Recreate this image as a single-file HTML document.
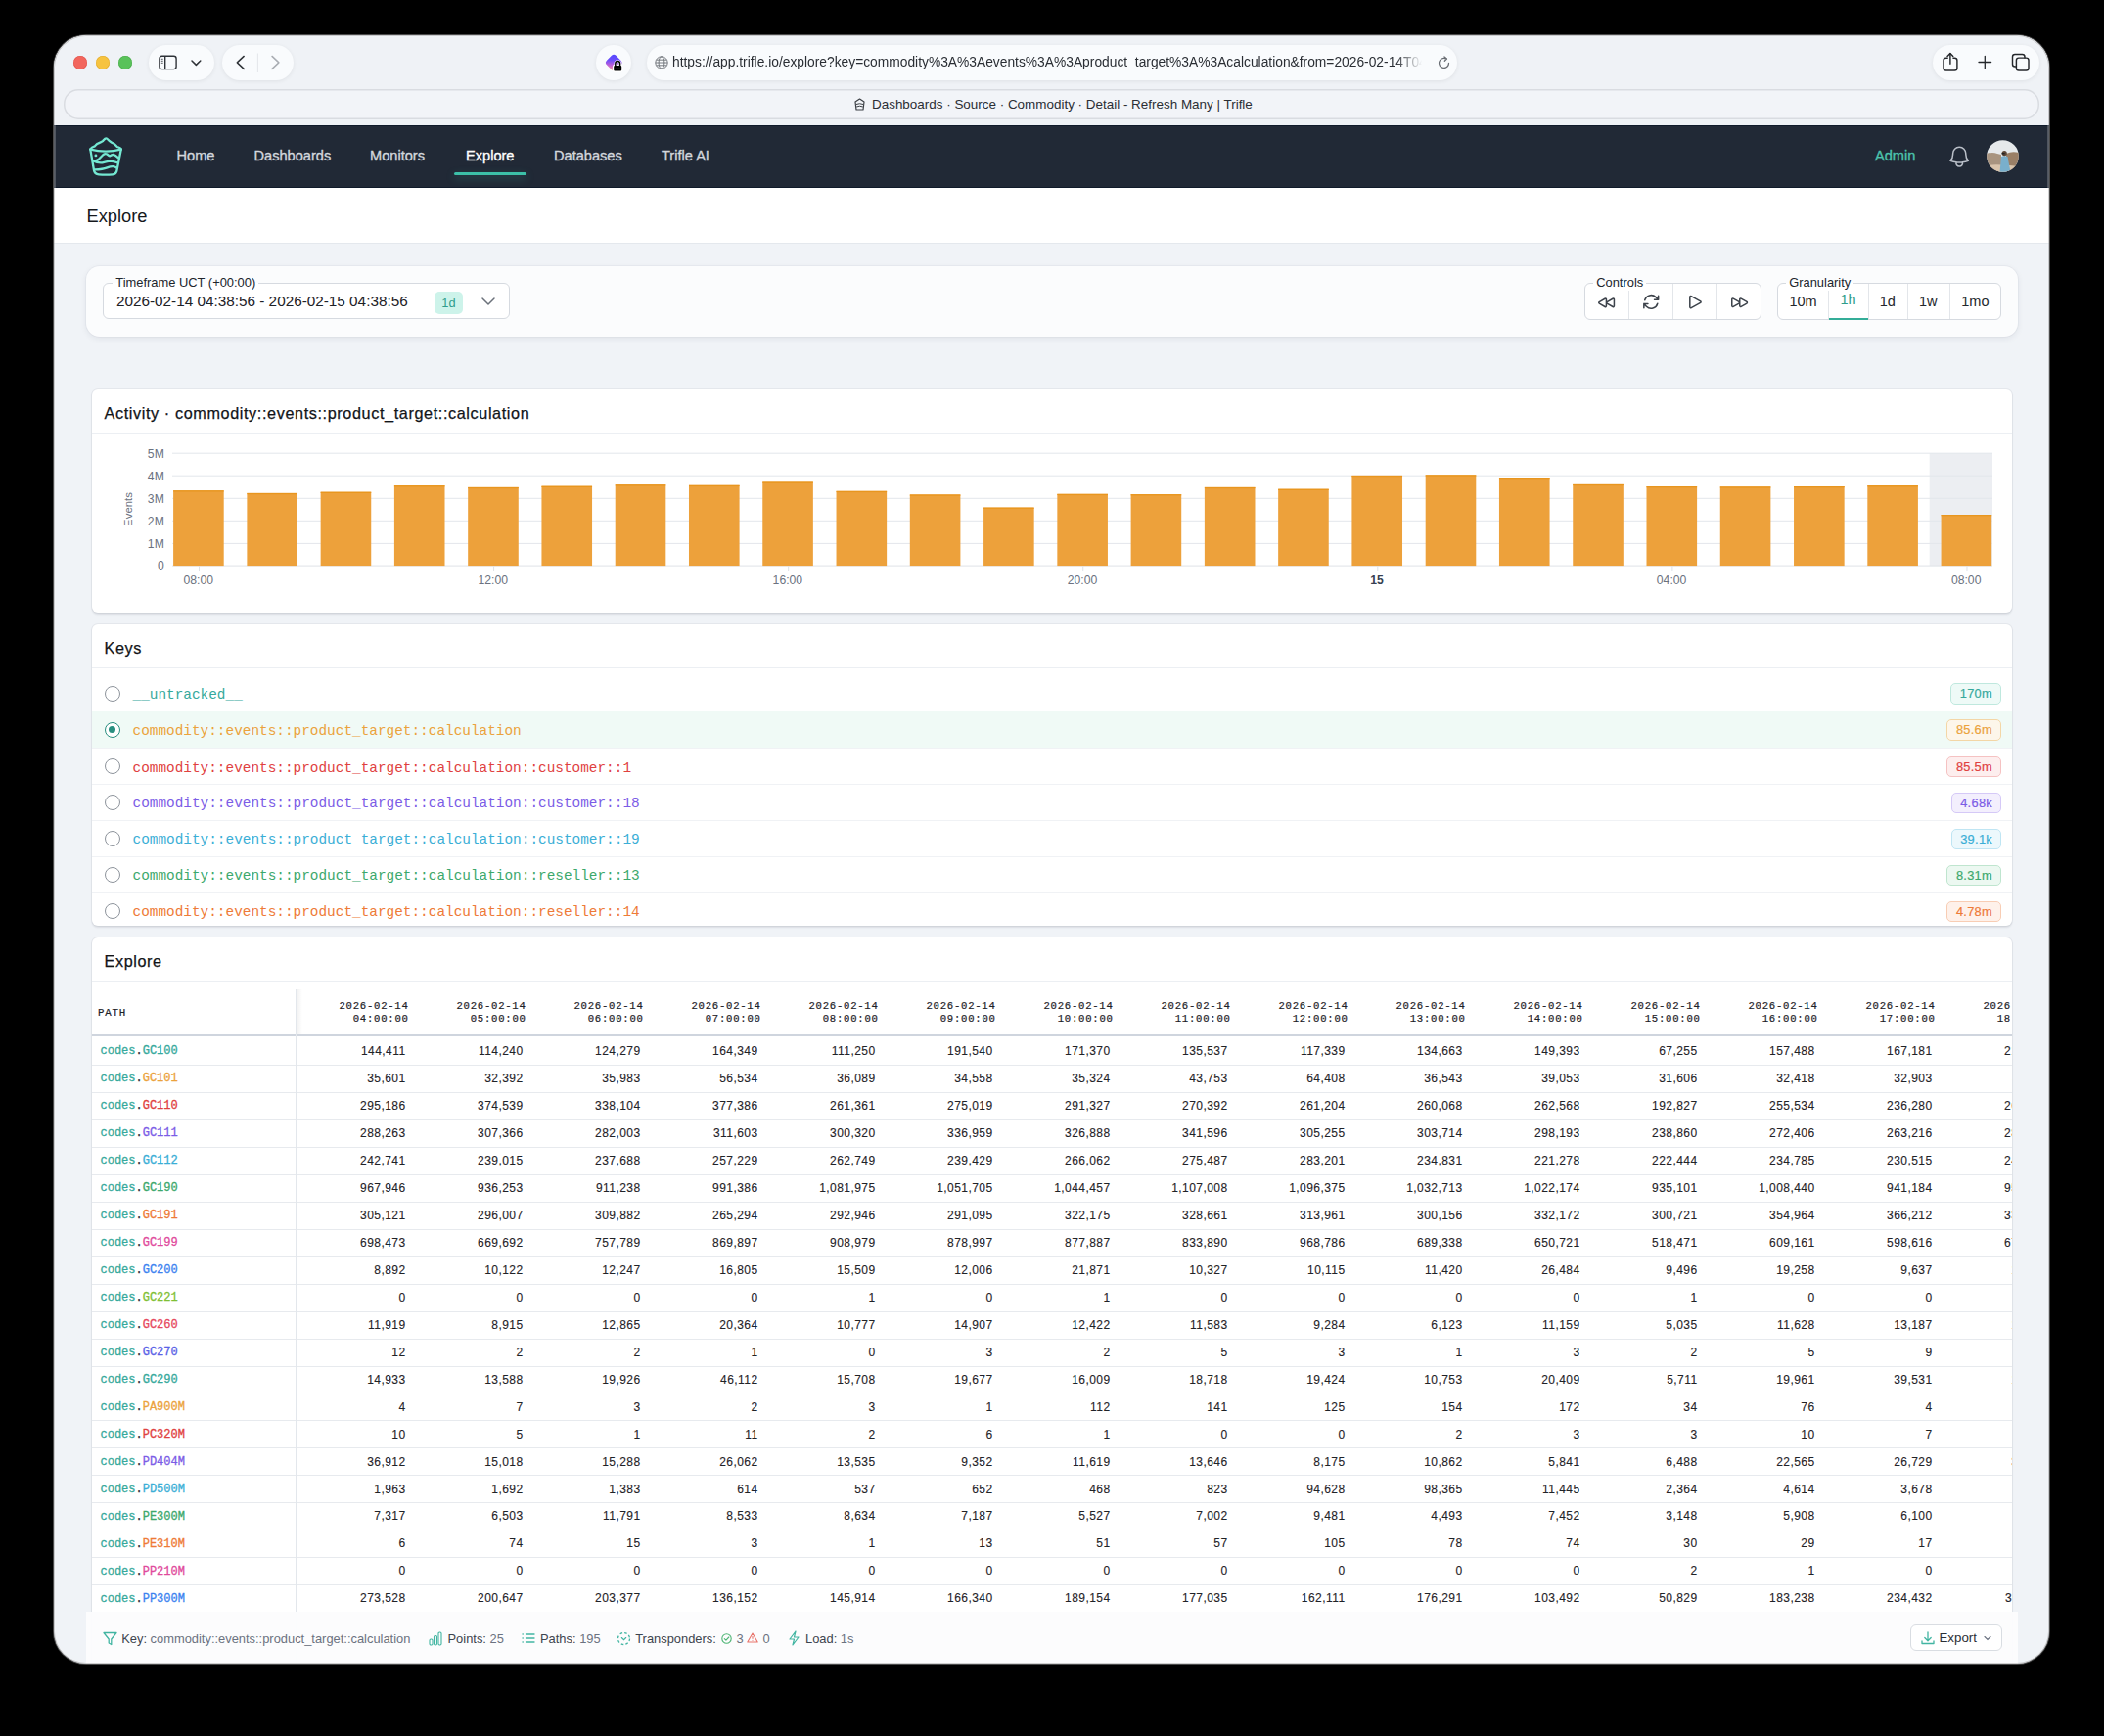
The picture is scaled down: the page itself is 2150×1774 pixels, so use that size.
<!DOCTYPE html><html><head><meta charset="utf-8"><title>Trifle</title><style>
*{box-sizing:border-box;margin:0;padding:0}
html,body{width:2150px;height:1774px;overflow:hidden;background:#000}
body{font-family:"Liberation Sans",sans-serif;color:#1f2329;position:relative}
.mono{font-family:"Liberation Mono",monospace}
.win{position:absolute;left:55px;top:36px;width:2039px;height:1664px;border-radius:33px;overflow:hidden;background:#f0f3f7;box-shadow:0 0 0 1px #4a4a4a}
.abs{position:absolute}
.pill{position:absolute;background:#f9fbfd;border-radius:18px;box-shadow:0 1px 4px rgba(0,0,0,.07)}
.nav{position:absolute;left:0;top:92px;width:2039px;height:63.8px;background:#212936;box-shadow:inset 0 1px 0 #0f1a2a,inset 0 -1px 0 #0f1a2a}
.navi{position:absolute;top:0;height:63px;line-height:63px;font-size:14.6px;color:#d3d7dd;white-space:nowrap;-webkit-text-stroke:.35px currentColor}
.card{position:absolute;background:#fff;border-radius:6px;box-shadow:0 1.5px 2px rgba(30,40,60,.10),0 0 0 1px rgba(30,40,60,.05)}
.chd{position:absolute;left:0;top:0;right:0;height:45px;border-bottom:1px solid #eceff3}
.ctitle{position:absolute;left:12.5px;top:2px;line-height:44px;font-size:16.2px;color:#111418;white-space:nowrap;letter-spacing:.62px;-webkit-text-stroke:.25px currentColor}
.fs{position:absolute;border:1px solid #d6dae0;border-radius:6px;background:#fff}
.lg{position:absolute;z-index:2;top:-9px;font-size:12.9px;line-height:16px;background:linear-gradient(#fbfcfd 50%,#fff 50%);padding:0 3px;color:#20252c;white-space:nowrap}
.seg{position:absolute;top:0;bottom:0;border-left:1px solid #e3e6ea}
.krow{position:absolute;left:0;right:0;height:36.85px;border-top:1px solid #f0f2f5}
.radio{position:absolute;left:13px;width:16px;height:16px;border-radius:50%;border:1.5px solid #8e949c;background:#fff}
.ktxt{position:absolute;left:41.5px;font-size:14.4px;white-space:nowrap}
.badge{position:absolute;right:11px;height:21.3px;line-height:20px;border-radius:5px;font-size:12.8px;letter-spacing:.3px;-webkit-text-stroke:.2px currentColor;padding:0 8px 0 8.5px;border:1px solid}
.th{position:absolute;font-size:10.6px;font-weight:normal;-webkit-text-stroke:.2px #1d2127;letter-spacing:.75px;line-height:13.3px;text-align:right;color:#1d2127;white-space:pre}
.num{position:absolute;font-size:12px;letter-spacing:.45px;text-align:right;color:#1f2328;white-space:nowrap;-webkit-text-stroke:.12px currentColor}
.ptxt{position:absolute;left:8.5px;font-size:12px;white-space:nowrap;-webkit-text-stroke:.3px currentColor}
.sb{position:absolute;font-size:12.9px;color:#3d444e;white-space:nowrap}
.sbv{color:#6b7280}
</style></head><body>
<div class="win">
<div class="abs" style="left:0;top:0;width:2039px;height:92px;background:#eff2f6"></div>
<div class="abs" style="left:20px;top:21px;width:14px;height:14px;border-radius:50%;background:#f2665d;box-shadow:inset 0 0 0 .5px #e0534b"></div>
<div class="abs" style="left:43px;top:21px;width:14px;height:14px;border-radius:50%;background:#f6c33f;box-shadow:inset 0 0 0 .5px #e1aa2a"></div>
<div class="abs" style="left:66px;top:21px;width:14px;height:14px;border-radius:50%;background:#59c25a;box-shadow:inset 0 0 0 .5px #48a949"></div>
<div class="pill" style="left:97px;top:10px;width:67px;height:35.5px"></div>
<svg class="abs" style="left:105px;top:19px" width="50" height="18" viewBox="0 0 50 18"><rect x="2.9" y="2.3" width="17.2" height="13.3" rx="2.6" fill="none" stroke="#2f3338" stroke-width="1.4"/><line x1="8.7" y1="2.3" x2="8.7" y2="15.6" stroke="#2f3338" stroke-width="1.4"/><g stroke="#55595f" stroke-width="1" stroke-linecap="round"><line x1="5.2" y1="5.3" x2="6.3" y2="5.3"/><line x1="5.2" y1="7.3" x2="6.3" y2="7.3"/><line x1="5.2" y1="9.3" x2="6.3" y2="9.3"/></g><path d="M36 7 L40.4 11.4 L44.8 7" fill="none" stroke="#2f3338" stroke-width="1.5" stroke-linecap="round" stroke-linejoin="round"/></svg>
<div class="pill" style="left:172px;top:10px;width:72.5px;height:35.5px"></div>
<svg class="abs" style="left:181px;top:17px" width="56" height="22" viewBox="0 0 56 22"><path d="M13.2 4.4 L6.3 10.9 L13.2 17.4" fill="none" stroke="#2f3338" stroke-width="1.45" stroke-linecap="round" stroke-linejoin="round"/><line x1="27.4" y1="1.5" x2="27.4" y2="21" stroke="#e3e6ea" stroke-width="1"/><path d="M42 4.4 L48.9 10.9 L42 17.4" fill="none" stroke="#a9adb3" stroke-width="1.45" stroke-linecap="round" stroke-linejoin="round"/></svg>
<div class="pill" style="left:554px;top:10px;width:36px;height:36px;border-radius:50%"></div>
<svg class="abs" style="left:560px;top:16px" width="24" height="24" viewBox="0 0 24 24"><defs><linearGradient id="eg" x1="0" y1="0" x2="1" y2="1"><stop offset="0" stop-color="#4f46ff"/><stop offset=".35" stop-color="#6a4dfb"/><stop offset=".65" stop-color="#c463d6"/><stop offset="1" stop-color="#ffb070"/></linearGradient></defs><rect x="5.5" y="5.3" width="13.4" height="13.4" rx="3.2" transform="rotate(45 12.2 12)" fill="url(#eg)"/><g stroke="#fff" stroke-width="2.6"><path d="M13.8 15.5 V13 A2.4 2.4 0 0 1 18.6 13 V15.5" fill="none"/><rect x="12.2" y="15" width="8" height="5.6" rx="1.1" fill="#fff"/></g><path d="M13.8 15.5 V13 A2.4 2.4 0 0 1 18.6 13 V15.5" fill="none" stroke="#000" stroke-width="1.5"/><rect x="12.2" y="15" width="8" height="5.6" rx="1.1" fill="#000"/><line x1="13.6" y1="17.8" x2="18.8" y2="17.8" stroke="#333" stroke-width=".5"/></svg>
<div class="pill" style="left:606px;top:10px;width:828px;height:36px"></div>
<svg class="abs" style="left:613.5px;top:20.8px" width="14" height="14" viewBox="0 0 14 14"><g fill="none" stroke="#6a6e74" stroke-width=".9"><circle cx="7" cy="7" r="6.2"/><ellipse cx="7" cy="7" rx="2.9" ry="6.2"/><line x1="0.8" y1="7" x2="13.2" y2="7"/><line x1="1.6" y1="4.2" x2="12.4" y2="4.2"/><line x1="1.6" y1="9.8" x2="12.4" y2="9.8"/></g></svg>
<div class="abs" style="left:632px;top:18px;width:770px;height:20px;overflow:hidden;white-space:nowrap;font-size:13.8px;line-height:20px;color:#2a2e34;-webkit-mask-image:linear-gradient(90deg,#000 96%,transparent 99.5%)">https://app.trifle.io/explore?key=commodity%3A%3Aevents%3A%3Aproduct_target%3A%3Acalculation&amp;from=2026-02-14T04:38:56</div>
<svg class="abs" style="left:1413px;top:21px" width="15" height="15" viewBox="0 0 15 15"><path d="M12.5 7.5 A5 5 0 1 1 9.5 2.9" fill="none" stroke="#6a6e74" stroke-width="1.3" stroke-linecap="round"/><path d="M8 1 L10.5 3 L8.3 5.2" fill="none" stroke="#6a6e74" stroke-width="1.3" stroke-linecap="round" stroke-linejoin="round"/></svg>
<div class="pill" style="left:1920px;top:10px;width:109px;height:36px"></div>
<svg class="abs" style="left:1927px;top:16px" width="96" height="24" viewBox="0 0 96 24"><g fill="none" stroke="#24272b" stroke-width="1.45" stroke-linecap="round" stroke-linejoin="round"><path d="M8.2 7.3 H6.5 A2.5 2.5 0 0 0 4 9.8 V17.5 A2.5 2.5 0 0 0 6.5 20 H15.4 A2.5 2.5 0 0 0 17.9 17.5 V9.8 A2.5 2.5 0 0 0 15.4 7.3 H14"/><path d="M10.9 2.6 V13.2"/><path d="M8 5.5 L10.9 2.5 L13.8 5.5"/><path d="M46.3 5.3 V17.8 M40 11.5 H52.6" stroke-width="1.3"/><rect x="78.4" y="7.1" width="12.6" height="12.9" rx="2.5"/><path d="M78.4 16 H77 A2.5 2.5 0 0 1 74.5 13.5 V6 A2.5 2.5 0 0 1 77 3.5 H84.5 A2.5 2.5 0 0 1 87 6 V7.1"/></g></svg>
<div class="abs" style="left:10px;top:55.3px;width:2019px;height:30.5px;border-radius:15px;background:#f2f4f8;box-shadow:inset 0 0 0 1.5px #d9dce1"></div>
<svg class="abs" style="left:816px;top:63px" width="15" height="15" viewBox="0 0 15 15"><path d="M3 5 L7.5 2 L12 5 L11 13 H4 Z" fill="none" stroke="#3b3f45" stroke-width="1.2" stroke-linejoin="round"/><path d="M4 7.5 Q7.5 6 11 7.5 M4.2 10 Q7.5 8.5 10.8 10" fill="none" stroke="#3b3f45" stroke-width="1"/></svg>
<div class="abs" style="left:836px;top:61px;height:19px;line-height:19px;font-size:13.45px;color:#2a2e34;white-space:nowrap">Dashboards · Source · Commodity · Detail - Refresh Many | Trifle</div>
<div class="nav">
<svg class="abs" style="left:25px;top:4px" width="55" height="55" viewBox="0 0 55 55"><g fill="none" stroke="#74e8d2" stroke-width="2.3" stroke-linejoin="round" stroke-linecap="round"><path d="M12.3 20.4 C13.5 18.6 15 18 16.8 17.4 C18.2 16.2 18.8 15 20 14.6 C22 13.8 23.5 13.4 25 12.2 C26.2 10.8 27 9.3 28.4 9.3 C29.6 9.3 30.6 11 32 12.2 C33.5 13.6 35 14.2 36.6 14.9 C38 15.7 38.6 17.2 39.8 17.9 C41.5 18.8 43 19 43.8 20.4"/><path d="M12.3 20.6 Q28 24.5 43.8 20.6"/><path d="M12.3 20.6 L16 42 Q16.6 46 21 46.3 Q28 47 35 46.3 Q39 46 39.5 42 L43.8 20.6"/><path d="M15 32.2 Q18.5 32.6 20.6 31 Q23 28.5 25.5 26 Q27.5 24.5 29.5 25.6 Q31 27 32.2 27.4 Q34 26 35.8 25.8 Q38 26.5 40.8 29.2"/><path d="M15.3 32.6 Q19.5 34.8 24.5 34.4 Q28.5 33.2 32 32.6 Q36 32.6 40 34.2"/><path d="M16.8 41.4 Q25 41.2 29.5 39.4 Q33.5 37.8 36 38.2 Q38 38.6 39.2 39.6"/></g><circle cx="17.9" cy="26.9" r="1.45" fill="#74e8d2"/></svg>
<div class="navi" style="left:125.5px;color:#d3d7dd">Home</div>
<div class="navi" style="left:204.5px;color:#d3d7dd">Dashboards</div>
<div class="navi" style="left:323px;color:#d3d7dd">Monitors</div>
<div class="navi" style="left:421px;color:#ffffff">Explore</div>
<div class="navi" style="left:511px;color:#d3d7dd">Databases</div>
<div class="navi" style="left:621px;color:#d3d7dd">Trifle AI</div>
<div class="abs" style="left:409px;top:48.19999999999999px;width:74px;height:3px;background:#3cc0a8;border-radius:2px;box-shadow:0 3px 8px rgba(60,192,168,.35)"></div>
<div class="navi" style="left:1861px;color:#4cc4ad">Admin</div>
<svg class="abs" style="left:1933.8px;top:19.19999999999999px" width="27" height="27" viewBox="0 0 27 27"><g transform="scale(1.1)"><path d="M14.857 17.082a23.848 23.848 0 0 0 5.454-1.31A8.967 8.967 0 0 1 18 9.75V9A6 6 0 0 0 6 9v.75a8.967 8.967 0 0 1-2.312 6.022c1.733.64 3.56 1.085 5.455 1.31m5.714 0a24.255 24.255 0 0 1-5.714 0m5.714 0a3 3 0 1 1-5.714 0" fill="none" stroke="#b9bfc8" stroke-width="1.4" stroke-linecap="round" stroke-linejoin="round"/></g></svg>
<svg class="abs" style="left:1974.6px;top:15.099999999999994px" width="33" height="33" viewBox="0 0 33 33"><defs><clipPath id="av"><circle cx="16.5" cy="16.5" r="16.3"/></clipPath></defs><g clip-path="url(#av)"><rect width="33" height="33" fill="#e6e9eb"/><path d="M0 14 Q6 12 11 14 L15 15 L15 33 L0 33 Z" fill="#a89480"/><path d="M20 14 Q26 11 33 13 L33 33 L20 33 Z" fill="#9a7f66"/><path d="M0 26 Q10 24 33 27 L33 33 L0 33 Z" fill="#d9c4ac"/><path d="M15 17 Q18 15.5 21.5 17 L24.5 33 L13.5 33 Z" fill="#79afcc"/><circle cx="18.2" cy="13.6" r="2.6" fill="#5a4536"/><rect x="15.6" y="13" width="3" height="1.4" fill="#222"/></g></svg>
</div>
<div class="abs" style="left:0;top:155.8px;width:2039px;height:56.8px;background:#fff;border-bottom:1px solid #e4e8ed"></div>
<div class="abs" style="left:33.5px;top:156.8px;line-height:56px;font-size:18.3px;color:#15181c">Explore</div>
<div class="abs" style="left:33px;top:236px;width:1974px;height:72px;background:#fbfcfd;border-radius:14px;box-shadow:0 2px 6px rgba(30,40,60,.08),0 0 0 1px rgba(30,40,60,.03)">
<div class="fs" style="left:16.799999999999997px;top:17px;width:416.5px;height:37.3px">
<div class="lg" style="left:9.5px">Timeframe UCT (+00:00)</div>
<div class="abs" style="left:13.2px;top:8.3px;font-size:15.3px;line-height:20px;color:#1d2126;white-space:nowrap">2026-02-14 04:38:56 - 2026-02-15 04:38:56</div>
<div class="abs" style="left:338.1px;top:7.600000000000023px;width:29px;height:23px;border-radius:5px;background:#cdf3ea;color:#2f9d8c;font-size:12.8px;line-height:23px;text-align:center">1d</div>
<svg class="abs" style="left:385.0px;top:12px" width="16" height="12" viewBox="0 0 16 12"><path d="M2 3 L8 9 L14 3" fill="none" stroke="#6c727b" stroke-width="1.5" stroke-linecap="round" stroke-linejoin="round"/></svg>
</div>
<div class="fs" style="left:1530.7px;top:17.399999999999977px;width:181.5px;height:37.6px">
<div class="lg" style="left:8.5px">Controls</div>
<div class="seg" style="left:44.6px"></div>
<div class="seg" style="left:89.4px"></div>
<div class="seg" style="left:134.4px"></div>
<svg class="abs" style="left:0;top:0" width="180" height="37" viewBox="0 0 180 37"><g fill="none" stroke="#3d434b" stroke-width="1.85" stroke-linejoin="round" stroke-linecap="round"><g transform="translate(12.2,8.9) scale(0.82)"><path d="M21 16.811c0 .864-.933 1.406-1.683.977l-7.108-4.061a1.125 1.125 0 0 1 0-1.954l7.108-4.061A1.125 1.125 0 0 1 21 8.689v8.122ZM11.25 16.811c0 .864-.933 1.406-1.683.977l-7.108-4.061a1.125 1.125 0 0 1 0-1.954L9.567 7.71a1.125 1.125 0 0 1 1.683.977v8.122Z"/></g><g transform="translate(57.4,8.6) scale(0.82)"><path d="M16.023 9.348h4.992v-.001M2.985 19.644v-4.992m0 0h4.992m-4.993 0 3.181 3.183a8.25 8.25 0 0 0 13.803-3.7M4.031 9.865a8.25 8.25 0 0 1 13.803-3.7l3.181 3.182m0-4.991v4.99"/></g><g transform="translate(102.5,8.8) scale(0.82)"><path d="M5.25 5.653c0-.856.917-1.398 1.667-.986l11.54 6.347a1.125 1.125 0 0 1 0 1.972l-11.54 6.347a1.125 1.125 0 0 1-1.667-.986V5.653Z"/></g><g transform="translate(147.3,8.8) scale(0.82)"><path d="M3 8.689c0-.864.933-1.406 1.683-.977l7.108 4.061a1.125 1.125 0 0 1 0 1.954l-7.108 4.061A1.125 1.125 0 0 1 3 16.811V8.69ZM12.75 8.689c0-.864.933-1.406 1.683-.977l7.108 4.061a1.125 1.125 0 0 1 0 1.954l-7.108 4.061a1.125 1.125 0 0 1-1.683-.977V8.69Z"/></g></g></svg>
</div>
<div class="fs" style="left:1727.7px;top:17.399999999999977px;width:229.5px;height:37.6px;overflow:visible">
<div class="lg" style="left:8.5px">Granularity</div>
<div class="abs" style="left:0.0px;width:51.700000000000045px;top:9.5px;text-align:center;font-size:14.5px;line-height:17px;color:#23272d">10m</div>
<div class="seg" style="left:51.700000000000045px"></div>
<div class="abs" style="left:51.700000000000045px;width:40.399999999999864px;top:8px;text-align:center;font-size:14.5px;line-height:17px;color:#2f9d8c">1h</div>
<div class="seg" style="left:92.09999999999991px"></div>
<div class="abs" style="left:92.09999999999991px;width:40.0px;top:9.5px;text-align:center;font-size:14.5px;line-height:17px;color:#23272d">1d</div>
<div class="seg" style="left:132.0999999999999px"></div>
<div class="abs" style="left:132.0999999999999px;width:43.100000000000136px;top:9.5px;text-align:center;font-size:14.5px;line-height:17px;color:#23272d">1w</div>
<div class="seg" style="left:175.20000000000005px"></div>
<div class="abs" style="left:175.20000000000005px;width:53.0px;top:9.5px;text-align:center;font-size:14.5px;line-height:17px;color:#23272d">1mo</div>
<div class="abs" style="left:52.40000000000009px;top:34.400000000000034px;width:40.2px;height:2px;background:#34ad98"></div>
</div>
</div>
<div class="card" style="left:39px;top:362px;width:1962px;height:228px">
<div class="chd"><div class="ctitle">Activity · commodity::events::product_target::calculation</div></div>
<svg class="abs" style="left:0;top:0" width="1962" height="228" viewBox="0 0 1962 228"><rect x="1877.7" y="65.19999999999999" width="64.29999999999995" height="114.90000000000003" fill="#eceef2"/><line x1="82" y1="65.19999999999999" x2="1942" y2="65.19999999999999" stroke="#e3e6eb" stroke-width="1"/><line x1="82" y1="88.19999999999999" x2="1942" y2="88.19999999999999" stroke="#e3e6eb" stroke-width="1"/><line x1="82" y1="111.30000000000001" x2="1942" y2="111.30000000000001" stroke="#e3e6eb" stroke-width="1"/><line x1="82" y1="134.29999999999995" x2="1942" y2="134.29999999999995" stroke="#e3e6eb" stroke-width="1"/><line x1="82" y1="157.39999999999998" x2="1942" y2="157.39999999999998" stroke="#e3e6eb" stroke-width="1"/><line x1="82" y1="180.10000000000002" x2="1942" y2="180.10000000000002" stroke="#dfe2e7" stroke-width="1"/><rect x="83.10" y="103.20" width="51.6" height="76.90" fill="#eda13b"/><rect x="83.10" y="103.20" width="51.6" height="1.3" fill="#e8961f"/><rect x="158.37" y="105.90" width="51.6" height="74.20" fill="#eda13b"/><rect x="158.37" y="105.90" width="51.6" height="1.3" fill="#e8961f"/><rect x="233.64" y="104.70" width="51.6" height="75.40" fill="#eda13b"/><rect x="233.64" y="104.70" width="51.6" height="1.3" fill="#e8961f"/><rect x="308.91" y="98.10" width="51.6" height="82.00" fill="#eda13b"/><rect x="308.91" y="98.10" width="51.6" height="1.3" fill="#e8961f"/><rect x="384.18" y="99.90" width="51.6" height="80.20" fill="#eda13b"/><rect x="384.18" y="99.90" width="51.6" height="1.3" fill="#e8961f"/><rect x="459.45" y="98.70" width="51.6" height="81.40" fill="#eda13b"/><rect x="459.45" y="98.70" width="51.6" height="1.3" fill="#e8961f"/><rect x="534.72" y="97.20" width="51.6" height="82.90" fill="#eda13b"/><rect x="534.72" y="97.20" width="51.6" height="1.3" fill="#e8961f"/><rect x="609.99" y="97.80" width="51.6" height="82.30" fill="#eda13b"/><rect x="609.99" y="97.80" width="51.6" height="1.3" fill="#e8961f"/><rect x="685.26" y="94.50" width="51.6" height="85.60" fill="#eda13b"/><rect x="685.26" y="94.50" width="51.6" height="1.3" fill="#e8961f"/><rect x="760.53" y="103.80" width="51.6" height="76.30" fill="#eda13b"/><rect x="760.53" y="103.80" width="51.6" height="1.3" fill="#e8961f"/><rect x="835.80" y="107.40" width="51.6" height="72.70" fill="#eda13b"/><rect x="835.80" y="107.40" width="51.6" height="1.3" fill="#e8961f"/><rect x="911.07" y="120.60" width="51.6" height="59.50" fill="#eda13b"/><rect x="911.07" y="120.60" width="51.6" height="1.3" fill="#e8961f"/><rect x="986.34" y="106.80" width="51.6" height="73.30" fill="#eda13b"/><rect x="986.34" y="106.80" width="51.6" height="1.3" fill="#e8961f"/><rect x="1061.61" y="107.10" width="51.6" height="73.00" fill="#eda13b"/><rect x="1061.61" y="107.10" width="51.6" height="1.3" fill="#e8961f"/><rect x="1136.88" y="99.90" width="51.6" height="80.20" fill="#eda13b"/><rect x="1136.88" y="99.90" width="51.6" height="1.3" fill="#e8961f"/><rect x="1212.15" y="101.70" width="51.6" height="78.40" fill="#eda13b"/><rect x="1212.15" y="101.70" width="51.6" height="1.3" fill="#e8961f"/><rect x="1287.42" y="87.90" width="51.6" height="92.20" fill="#eda13b"/><rect x="1287.42" y="87.90" width="51.6" height="1.3" fill="#e8961f"/><rect x="1362.69" y="87.30" width="51.6" height="92.80" fill="#eda13b"/><rect x="1362.69" y="87.30" width="51.6" height="1.3" fill="#e8961f"/><rect x="1437.96" y="90.00" width="51.6" height="90.10" fill="#eda13b"/><rect x="1437.96" y="90.00" width="51.6" height="1.3" fill="#e8961f"/><rect x="1513.23" y="96.90" width="51.6" height="83.20" fill="#eda13b"/><rect x="1513.23" y="96.90" width="51.6" height="1.3" fill="#e8961f"/><rect x="1588.50" y="99.00" width="51.6" height="81.10" fill="#eda13b"/><rect x="1588.50" y="99.00" width="51.6" height="1.3" fill="#e8961f"/><rect x="1663.77" y="99.30" width="51.6" height="80.80" fill="#eda13b"/><rect x="1663.77" y="99.30" width="51.6" height="1.3" fill="#e8961f"/><rect x="1739.04" y="99.00" width="51.6" height="81.10" fill="#eda13b"/><rect x="1739.04" y="99.00" width="51.6" height="1.3" fill="#e8961f"/><rect x="1814.31" y="98.10" width="51.6" height="82.00" fill="#eda13b"/><rect x="1814.31" y="98.10" width="51.6" height="1.3" fill="#e8961f"/><rect x="1889.58" y="128.00" width="51.6" height="52.10" fill="#eda13b"/><rect x="1889.58" y="128.00" width="51.6" height="1.3" fill="#e8961f"/><text x="73.80000000000001" y="69.49999999999999" text-anchor="end" font-size="12.2" fill="#6b7280" font-family="Liberation Sans">5M</text><text x="73.80000000000001" y="92.49999999999999" text-anchor="end" font-size="12.2" fill="#6b7280" font-family="Liberation Sans">4M</text><text x="73.80000000000001" y="115.60000000000001" text-anchor="end" font-size="12.2" fill="#6b7280" font-family="Liberation Sans">3M</text><text x="73.80000000000001" y="138.59999999999997" text-anchor="end" font-size="12.2" fill="#6b7280" font-family="Liberation Sans">2M</text><text x="73.80000000000001" y="161.7" text-anchor="end" font-size="12.2" fill="#6b7280" font-family="Liberation Sans">1M</text><text x="73.80000000000001" y="184.40000000000003" text-anchor="end" font-size="12.2" fill="#6b7280" font-family="Liberation Sans">0</text><text x="0" y="0" transform="translate(40.69999999999999,122.5) rotate(-90)" text-anchor="middle" font-size="11.4" fill="#6b7280" font-family="Liberation Sans">Events</text><line x1="109.50" y1="180.10000000000002" x2="109.50" y2="185" stroke="#dfe2e7" stroke-width="1"/><text x="108.70" y="198.79999999999995" text-anchor="middle" font-size="12.2" fill="#6b7280" font-family="Liberation Sans">08:00</text><line x1="410.58" y1="180.10000000000002" x2="410.58" y2="185" stroke="#dfe2e7" stroke-width="1"/><text x="409.78" y="198.79999999999995" text-anchor="middle" font-size="12.2" fill="#6b7280" font-family="Liberation Sans">12:00</text><line x1="711.66" y1="180.10000000000002" x2="711.66" y2="185" stroke="#dfe2e7" stroke-width="1"/><text x="710.86" y="198.79999999999995" text-anchor="middle" font-size="12.2" fill="#6b7280" font-family="Liberation Sans">16:00</text><line x1="1012.74" y1="180.10000000000002" x2="1012.74" y2="185" stroke="#dfe2e7" stroke-width="1"/><text x="1011.94" y="198.79999999999995" text-anchor="middle" font-size="12.2" fill="#6b7280" font-family="Liberation Sans">20:00</text><line x1="1313.82" y1="180.10000000000002" x2="1313.82" y2="185" stroke="#dfe2e7" stroke-width="1"/><text x="1313.02" y="198.79999999999995" text-anchor="middle" font-size="12.2" font-weight="bold" fill="#374151" font-family="Liberation Sans">15</text><line x1="1614.90" y1="180.10000000000002" x2="1614.90" y2="185" stroke="#dfe2e7" stroke-width="1"/><text x="1614.10" y="198.79999999999995" text-anchor="middle" font-size="12.2" fill="#6b7280" font-family="Liberation Sans">04:00</text><line x1="1915.98" y1="180.10000000000002" x2="1915.98" y2="185" stroke="#dfe2e7" stroke-width="1"/><text x="1915.18" y="198.79999999999995" text-anchor="middle" font-size="12.2" fill="#6b7280" font-family="Liberation Sans">08:00</text></svg>
</div>
<div class="card" style="left:39px;top:602px;width:1962px;height:308px;overflow:hidden">
<div class="chd"><div class="ctitle">Keys</div></div>
<div class="krow" style="top:52.40px;border-top:none;">
<div class="radio" style="top:10.4px"></div>
<div class="ktxt mono" style="top:10.5px;line-height:19px;color:#36a99c">__untracked__</div>
<div class="badge" style="top:8px;background:#eefaf7;border-color:#bfe8de;color:#36a99c">170m</div>
</div>
<div class="krow" style="top:89.25px;background:#f0faf6;border-top:none;">
<div class="radio" style="top:10.4px;border-color:#2a8f80;border-width:1.6px"><div class="abs" style="left:2.9px;top:2.9px;width:7px;height:7px;border-radius:50%;background:#2a8f80"></div></div>
<div class="ktxt mono" style="top:10.5px;line-height:19px;color:#eba23c">commodity::events::product_target::calculation</div>
<div class="badge" style="top:8px;background:#fdf6ea;border-color:#f3d6a6;color:#eba23c">85.6m</div>
</div>
<div class="krow" style="top:126.10px;">
<div class="radio" style="top:10.4px"></div>
<div class="ktxt mono" style="top:10.5px;line-height:19px;color:#e0413f">commodity::events::product_target::calculation::customer::1</div>
<div class="badge" style="top:8px;background:#fdeeee;border-color:#f5c2c2;color:#e0413f">85.5m</div>
</div>
<div class="krow" style="top:162.95px;">
<div class="radio" style="top:10.4px"></div>
<div class="ktxt mono" style="top:10.5px;line-height:19px;color:#7b5ce6">commodity::events::product_target::calculation::customer::18</div>
<div class="badge" style="top:8px;background:#f3effd;border-color:#d5c9f7;color:#7b5ce6">4.68k</div>
</div>
<div class="krow" style="top:199.80px;">
<div class="radio" style="top:10.4px"></div>
<div class="ktxt mono" style="top:10.5px;line-height:19px;color:#3aaed6">commodity::events::product_target::calculation::customer::19</div>
<div class="badge" style="top:8px;background:#ecf8fc;border-color:#bfe5f3;color:#3aaed6">39.1k</div>
</div>
<div class="krow" style="top:236.65px;">
<div class="radio" style="top:10.4px"></div>
<div class="ktxt mono" style="top:10.5px;line-height:19px;color:#3ca86c">commodity::events::product_target::calculation::reseller::13</div>
<div class="badge" style="top:8px;background:#ecf8f1;border-color:#bfe5cf;color:#3ca86c">8.31m</div>
</div>
<div class="krow" style="top:273.50px;">
<div class="radio" style="top:10.4px"></div>
<div class="ktxt mono" style="top:10.5px;line-height:19px;color:#ee7a37">commodity::events::product_target::calculation::reseller::14</div>
<div class="badge" style="top:8px;background:#fef1ea;border-color:#f8cdb4;color:#ee7a37">4.78m</div>
</div>
</div>
<div class="card" style="left:39px;top:922px;width:1962px;height:760px;overflow:hidden">
<div class="chd"><div class="ctitle">Explore</div></div>
<div class="abs" style="left:0;top:45.5px;width:1962px;height:54.5px;background:#fff"></div>
<div class="abs" style="left:0;top:99.20000000000005px;width:1962px;height:2px;background:#cfd5de"></div>
<div class="abs mono" style="left:5.900000000000006px;top:70px;font-size:10.8px;font-weight:normal;-webkit-text-stroke:.2px #1d2127;letter-spacing:.8px;color:#1d2127;line-height:14px">PATH</div>
<div class="th mono" style="left:202.80px;width:120.8px;top:64px">2026-02-14
04:00:00</div>
<div class="th mono" style="left:322.80px;width:120.8px;top:64px">2026-02-14
05:00:00</div>
<div class="th mono" style="left:442.80px;width:120.8px;top:64px">2026-02-14
06:00:00</div>
<div class="th mono" style="left:562.80px;width:120.8px;top:64px">2026-02-14
07:00:00</div>
<div class="th mono" style="left:682.80px;width:120.8px;top:64px">2026-02-14
08:00:00</div>
<div class="th mono" style="left:802.80px;width:120.8px;top:64px">2026-02-14
09:00:00</div>
<div class="th mono" style="left:922.80px;width:120.8px;top:64px">2026-02-14
10:00:00</div>
<div class="th mono" style="left:1042.80px;width:120.8px;top:64px">2026-02-14
11:00:00</div>
<div class="th mono" style="left:1162.80px;width:120.8px;top:64px">2026-02-14
12:00:00</div>
<div class="th mono" style="left:1282.80px;width:120.8px;top:64px">2026-02-14
13:00:00</div>
<div class="th mono" style="left:1402.80px;width:120.8px;top:64px">2026-02-14
14:00:00</div>
<div class="th mono" style="left:1522.80px;width:120.8px;top:64px">2026-02-14
15:00:00</div>
<div class="th mono" style="left:1642.80px;width:120.8px;top:64px">2026-02-14
16:00:00</div>
<div class="th mono" style="left:1762.80px;width:120.8px;top:64px">2026-02-14
17:00:00</div>
<div class="th mono" style="left:1882.80px;width:120.8px;top:64px">2026-02-14
18:00:00</div>
<div class="abs" style="left:0;top:129.77px;width:1962px;height:1px;background:#e7eaee"></div>
<div class="ptxt mono" style="top:108.10px;line-height:16px"><span style="color:#36a99c">codes</span><span style="color:#30353b">.</span><span style="color:#36a99c">GC100</span></div>
<div class="num" style="left:210.60px;width:110px;top:107.90px;line-height:16px">144,411</div>
<div class="num" style="left:330.60px;width:110px;top:107.90px;line-height:16px">114,240</div>
<div class="num" style="left:450.60px;width:110px;top:107.90px;line-height:16px">124,279</div>
<div class="num" style="left:570.60px;width:110px;top:107.90px;line-height:16px">164,349</div>
<div class="num" style="left:690.60px;width:110px;top:107.90px;line-height:16px">111,250</div>
<div class="num" style="left:810.60px;width:110px;top:107.90px;line-height:16px">191,540</div>
<div class="num" style="left:930.60px;width:110px;top:107.90px;line-height:16px">171,370</div>
<div class="num" style="left:1050.60px;width:110px;top:107.90px;line-height:16px">135,537</div>
<div class="num" style="left:1170.60px;width:110px;top:107.90px;line-height:16px">117,339</div>
<div class="num" style="left:1290.60px;width:110px;top:107.90px;line-height:16px">134,663</div>
<div class="num" style="left:1410.60px;width:110px;top:107.90px;line-height:16px">149,393</div>
<div class="num" style="left:1530.60px;width:110px;top:107.90px;line-height:16px">67,255</div>
<div class="num" style="left:1650.60px;width:110px;top:107.90px;line-height:16px">157,488</div>
<div class="num" style="left:1770.60px;width:110px;top:107.90px;line-height:16px">167,181</div>
<div class="num" style="left:1890.60px;width:110px;top:107.90px;line-height:16px">213,402</div>
<div class="abs" style="left:0;top:157.75px;width:1962px;height:1px;background:#e7eaee"></div>
<div class="ptxt mono" style="top:136.07px;line-height:16px"><span style="color:#36a99c">codes</span><span style="color:#30353b">.</span><span style="color:#eba23c">GC101</span></div>
<div class="num" style="left:210.60px;width:110px;top:135.87px;line-height:16px">35,601</div>
<div class="num" style="left:330.60px;width:110px;top:135.87px;line-height:16px">32,392</div>
<div class="num" style="left:450.60px;width:110px;top:135.87px;line-height:16px">35,983</div>
<div class="num" style="left:570.60px;width:110px;top:135.87px;line-height:16px">56,534</div>
<div class="num" style="left:690.60px;width:110px;top:135.87px;line-height:16px">36,089</div>
<div class="num" style="left:810.60px;width:110px;top:135.87px;line-height:16px">34,558</div>
<div class="num" style="left:930.60px;width:110px;top:135.87px;line-height:16px">35,324</div>
<div class="num" style="left:1050.60px;width:110px;top:135.87px;line-height:16px">43,753</div>
<div class="num" style="left:1170.60px;width:110px;top:135.87px;line-height:16px">64,408</div>
<div class="num" style="left:1290.60px;width:110px;top:135.87px;line-height:16px">36,543</div>
<div class="num" style="left:1410.60px;width:110px;top:135.87px;line-height:16px">39,053</div>
<div class="num" style="left:1530.60px;width:110px;top:135.87px;line-height:16px">31,606</div>
<div class="num" style="left:1650.60px;width:110px;top:135.87px;line-height:16px">32,418</div>
<div class="num" style="left:1770.60px;width:110px;top:135.87px;line-height:16px">32,903</div>
<div class="num" style="left:1890.60px;width:110px;top:135.87px;line-height:16px">34,118</div>
<div class="abs" style="left:0;top:185.72px;width:1962px;height:1px;background:#e7eaee"></div>
<div class="ptxt mono" style="top:164.05px;line-height:16px"><span style="color:#36a99c">codes</span><span style="color:#30353b">.</span><span style="color:#e0413f">GC110</span></div>
<div class="num" style="left:210.60px;width:110px;top:163.85px;line-height:16px">295,186</div>
<div class="num" style="left:330.60px;width:110px;top:163.85px;line-height:16px">374,539</div>
<div class="num" style="left:450.60px;width:110px;top:163.85px;line-height:16px">338,104</div>
<div class="num" style="left:570.60px;width:110px;top:163.85px;line-height:16px">377,386</div>
<div class="num" style="left:690.60px;width:110px;top:163.85px;line-height:16px">261,361</div>
<div class="num" style="left:810.60px;width:110px;top:163.85px;line-height:16px">275,019</div>
<div class="num" style="left:930.60px;width:110px;top:163.85px;line-height:16px">291,327</div>
<div class="num" style="left:1050.60px;width:110px;top:163.85px;line-height:16px">270,392</div>
<div class="num" style="left:1170.60px;width:110px;top:163.85px;line-height:16px">261,204</div>
<div class="num" style="left:1290.60px;width:110px;top:163.85px;line-height:16px">260,068</div>
<div class="num" style="left:1410.60px;width:110px;top:163.85px;line-height:16px">262,568</div>
<div class="num" style="left:1530.60px;width:110px;top:163.85px;line-height:16px">192,827</div>
<div class="num" style="left:1650.60px;width:110px;top:163.85px;line-height:16px">255,534</div>
<div class="num" style="left:1770.60px;width:110px;top:163.85px;line-height:16px">236,280</div>
<div class="num" style="left:1890.60px;width:110px;top:163.85px;line-height:16px">264,071</div>
<div class="abs" style="left:0;top:213.70px;width:1962px;height:1px;background:#e7eaee"></div>
<div class="ptxt mono" style="top:192.02px;line-height:16px"><span style="color:#36a99c">codes</span><span style="color:#30353b">.</span><span style="color:#7b5ce6">GC111</span></div>
<div class="num" style="left:210.60px;width:110px;top:191.82px;line-height:16px">288,263</div>
<div class="num" style="left:330.60px;width:110px;top:191.82px;line-height:16px">307,366</div>
<div class="num" style="left:450.60px;width:110px;top:191.82px;line-height:16px">282,003</div>
<div class="num" style="left:570.60px;width:110px;top:191.82px;line-height:16px">311,603</div>
<div class="num" style="left:690.60px;width:110px;top:191.82px;line-height:16px">300,320</div>
<div class="num" style="left:810.60px;width:110px;top:191.82px;line-height:16px">336,959</div>
<div class="num" style="left:930.60px;width:110px;top:191.82px;line-height:16px">326,888</div>
<div class="num" style="left:1050.60px;width:110px;top:191.82px;line-height:16px">341,596</div>
<div class="num" style="left:1170.60px;width:110px;top:191.82px;line-height:16px">305,255</div>
<div class="num" style="left:1290.60px;width:110px;top:191.82px;line-height:16px">303,714</div>
<div class="num" style="left:1410.60px;width:110px;top:191.82px;line-height:16px">298,193</div>
<div class="num" style="left:1530.60px;width:110px;top:191.82px;line-height:16px">238,860</div>
<div class="num" style="left:1650.60px;width:110px;top:191.82px;line-height:16px">272,406</div>
<div class="num" style="left:1770.60px;width:110px;top:191.82px;line-height:16px">263,216</div>
<div class="num" style="left:1890.60px;width:110px;top:191.82px;line-height:16px">281,590</div>
<div class="abs" style="left:0;top:241.67px;width:1962px;height:1px;background:#e7eaee"></div>
<div class="ptxt mono" style="top:220.00px;line-height:16px"><span style="color:#36a99c">codes</span><span style="color:#30353b">.</span><span style="color:#3aaed6">GC112</span></div>
<div class="num" style="left:210.60px;width:110px;top:219.80px;line-height:16px">242,741</div>
<div class="num" style="left:330.60px;width:110px;top:219.80px;line-height:16px">239,015</div>
<div class="num" style="left:450.60px;width:110px;top:219.80px;line-height:16px">237,688</div>
<div class="num" style="left:570.60px;width:110px;top:219.80px;line-height:16px">257,229</div>
<div class="num" style="left:690.60px;width:110px;top:219.80px;line-height:16px">262,749</div>
<div class="num" style="left:810.60px;width:110px;top:219.80px;line-height:16px">239,429</div>
<div class="num" style="left:930.60px;width:110px;top:219.80px;line-height:16px">266,062</div>
<div class="num" style="left:1050.60px;width:110px;top:219.80px;line-height:16px">275,487</div>
<div class="num" style="left:1170.60px;width:110px;top:219.80px;line-height:16px">283,201</div>
<div class="num" style="left:1290.60px;width:110px;top:219.80px;line-height:16px">234,831</div>
<div class="num" style="left:1410.60px;width:110px;top:219.80px;line-height:16px">221,278</div>
<div class="num" style="left:1530.60px;width:110px;top:219.80px;line-height:16px">222,444</div>
<div class="num" style="left:1650.60px;width:110px;top:219.80px;line-height:16px">234,785</div>
<div class="num" style="left:1770.60px;width:110px;top:219.80px;line-height:16px">230,515</div>
<div class="num" style="left:1890.60px;width:110px;top:219.80px;line-height:16px">241,662</div>
<div class="abs" style="left:0;top:269.65px;width:1962px;height:1px;background:#e7eaee"></div>
<div class="ptxt mono" style="top:247.97px;line-height:16px"><span style="color:#36a99c">codes</span><span style="color:#30353b">.</span><span style="color:#3ca86c">GC190</span></div>
<div class="num" style="left:210.60px;width:110px;top:247.77px;line-height:16px">967,946</div>
<div class="num" style="left:330.60px;width:110px;top:247.77px;line-height:16px">936,253</div>
<div class="num" style="left:450.60px;width:110px;top:247.77px;line-height:16px">911,238</div>
<div class="num" style="left:570.60px;width:110px;top:247.77px;line-height:16px">991,386</div>
<div class="num" style="left:690.60px;width:110px;top:247.77px;line-height:16px">1,081,975</div>
<div class="num" style="left:810.60px;width:110px;top:247.77px;line-height:16px">1,051,705</div>
<div class="num" style="left:930.60px;width:110px;top:247.77px;line-height:16px">1,044,457</div>
<div class="num" style="left:1050.60px;width:110px;top:247.77px;line-height:16px">1,107,008</div>
<div class="num" style="left:1170.60px;width:110px;top:247.77px;line-height:16px">1,096,375</div>
<div class="num" style="left:1290.60px;width:110px;top:247.77px;line-height:16px">1,032,713</div>
<div class="num" style="left:1410.60px;width:110px;top:247.77px;line-height:16px">1,022,174</div>
<div class="num" style="left:1530.60px;width:110px;top:247.77px;line-height:16px">935,101</div>
<div class="num" style="left:1650.60px;width:110px;top:247.77px;line-height:16px">1,008,440</div>
<div class="num" style="left:1770.60px;width:110px;top:247.77px;line-height:16px">941,184</div>
<div class="num" style="left:1890.60px;width:110px;top:247.77px;line-height:16px">951,277</div>
<div class="abs" style="left:0;top:297.62px;width:1962px;height:1px;background:#e7eaee"></div>
<div class="ptxt mono" style="top:275.95px;line-height:16px"><span style="color:#36a99c">codes</span><span style="color:#30353b">.</span><span style="color:#ee7a37">GC191</span></div>
<div class="num" style="left:210.60px;width:110px;top:275.75px;line-height:16px">305,121</div>
<div class="num" style="left:330.60px;width:110px;top:275.75px;line-height:16px">296,007</div>
<div class="num" style="left:450.60px;width:110px;top:275.75px;line-height:16px">309,882</div>
<div class="num" style="left:570.60px;width:110px;top:275.75px;line-height:16px">265,294</div>
<div class="num" style="left:690.60px;width:110px;top:275.75px;line-height:16px">292,946</div>
<div class="num" style="left:810.60px;width:110px;top:275.75px;line-height:16px">291,095</div>
<div class="num" style="left:930.60px;width:110px;top:275.75px;line-height:16px">322,175</div>
<div class="num" style="left:1050.60px;width:110px;top:275.75px;line-height:16px">328,661</div>
<div class="num" style="left:1170.60px;width:110px;top:275.75px;line-height:16px">313,961</div>
<div class="num" style="left:1290.60px;width:110px;top:275.75px;line-height:16px">300,156</div>
<div class="num" style="left:1410.60px;width:110px;top:275.75px;line-height:16px">332,172</div>
<div class="num" style="left:1530.60px;width:110px;top:275.75px;line-height:16px">300,721</div>
<div class="num" style="left:1650.60px;width:110px;top:275.75px;line-height:16px">354,964</div>
<div class="num" style="left:1770.60px;width:110px;top:275.75px;line-height:16px">366,212</div>
<div class="num" style="left:1890.60px;width:110px;top:275.75px;line-height:16px">331,480</div>
<div class="abs" style="left:0;top:325.60px;width:1962px;height:1px;background:#e7eaee"></div>
<div class="ptxt mono" style="top:303.92px;line-height:16px"><span style="color:#36a99c">codes</span><span style="color:#30353b">.</span><span style="color:#df4a9c">GC199</span></div>
<div class="num" style="left:210.60px;width:110px;top:303.72px;line-height:16px">698,473</div>
<div class="num" style="left:330.60px;width:110px;top:303.72px;line-height:16px">669,692</div>
<div class="num" style="left:450.60px;width:110px;top:303.72px;line-height:16px">757,789</div>
<div class="num" style="left:570.60px;width:110px;top:303.72px;line-height:16px">869,897</div>
<div class="num" style="left:690.60px;width:110px;top:303.72px;line-height:16px">908,979</div>
<div class="num" style="left:810.60px;width:110px;top:303.72px;line-height:16px">878,997</div>
<div class="num" style="left:930.60px;width:110px;top:303.72px;line-height:16px">877,887</div>
<div class="num" style="left:1050.60px;width:110px;top:303.72px;line-height:16px">833,890</div>
<div class="num" style="left:1170.60px;width:110px;top:303.72px;line-height:16px">968,786</div>
<div class="num" style="left:1290.60px;width:110px;top:303.72px;line-height:16px">689,338</div>
<div class="num" style="left:1410.60px;width:110px;top:303.72px;line-height:16px">650,721</div>
<div class="num" style="left:1530.60px;width:110px;top:303.72px;line-height:16px">518,471</div>
<div class="num" style="left:1650.60px;width:110px;top:303.72px;line-height:16px">609,161</div>
<div class="num" style="left:1770.60px;width:110px;top:303.72px;line-height:16px">598,616</div>
<div class="num" style="left:1890.60px;width:110px;top:303.72px;line-height:16px">672,905</div>
<div class="abs" style="left:0;top:353.57px;width:1962px;height:1px;background:#e7eaee"></div>
<div class="ptxt mono" style="top:331.90px;line-height:16px"><span style="color:#36a99c">codes</span><span style="color:#30353b">.</span><span style="color:#3b82f0">GC200</span></div>
<div class="num" style="left:210.60px;width:110px;top:331.70px;line-height:16px">8,892</div>
<div class="num" style="left:330.60px;width:110px;top:331.70px;line-height:16px">10,122</div>
<div class="num" style="left:450.60px;width:110px;top:331.70px;line-height:16px">12,247</div>
<div class="num" style="left:570.60px;width:110px;top:331.70px;line-height:16px">16,805</div>
<div class="num" style="left:690.60px;width:110px;top:331.70px;line-height:16px">15,509</div>
<div class="num" style="left:810.60px;width:110px;top:331.70px;line-height:16px">12,006</div>
<div class="num" style="left:930.60px;width:110px;top:331.70px;line-height:16px">21,871</div>
<div class="num" style="left:1050.60px;width:110px;top:331.70px;line-height:16px">10,327</div>
<div class="num" style="left:1170.60px;width:110px;top:331.70px;line-height:16px">10,115</div>
<div class="num" style="left:1290.60px;width:110px;top:331.70px;line-height:16px">11,420</div>
<div class="num" style="left:1410.60px;width:110px;top:331.70px;line-height:16px">26,484</div>
<div class="num" style="left:1530.60px;width:110px;top:331.70px;line-height:16px">9,496</div>
<div class="num" style="left:1650.60px;width:110px;top:331.70px;line-height:16px">19,258</div>
<div class="num" style="left:1770.60px;width:110px;top:331.70px;line-height:16px">9,637</div>
<div class="num" style="left:1890.60px;width:110px;top:331.70px;line-height:16px">10,418</div>
<div class="abs" style="left:0;top:381.55px;width:1962px;height:1px;background:#e7eaee"></div>
<div class="ptxt mono" style="top:359.88px;line-height:16px"><span style="color:#36a99c">codes</span><span style="color:#30353b">.</span><span style="color:#7fbf35">GC221</span></div>
<div class="num" style="left:210.60px;width:110px;top:359.68px;line-height:16px">0</div>
<div class="num" style="left:330.60px;width:110px;top:359.68px;line-height:16px">0</div>
<div class="num" style="left:450.60px;width:110px;top:359.68px;line-height:16px">0</div>
<div class="num" style="left:570.60px;width:110px;top:359.68px;line-height:16px">0</div>
<div class="num" style="left:690.60px;width:110px;top:359.68px;line-height:16px">1</div>
<div class="num" style="left:810.60px;width:110px;top:359.68px;line-height:16px">0</div>
<div class="num" style="left:930.60px;width:110px;top:359.68px;line-height:16px">1</div>
<div class="num" style="left:1050.60px;width:110px;top:359.68px;line-height:16px">0</div>
<div class="num" style="left:1170.60px;width:110px;top:359.68px;line-height:16px">0</div>
<div class="num" style="left:1290.60px;width:110px;top:359.68px;line-height:16px">0</div>
<div class="num" style="left:1410.60px;width:110px;top:359.68px;line-height:16px">0</div>
<div class="num" style="left:1530.60px;width:110px;top:359.68px;line-height:16px">1</div>
<div class="num" style="left:1650.60px;width:110px;top:359.68px;line-height:16px">0</div>
<div class="num" style="left:1770.60px;width:110px;top:359.68px;line-height:16px">0</div>
<div class="num" style="left:1890.60px;width:110px;top:359.68px;line-height:16px">0</div>
<div class="abs" style="left:0;top:409.52px;width:1962px;height:1px;background:#e7eaee"></div>
<div class="ptxt mono" style="top:387.85px;line-height:16px"><span style="color:#36a99c">codes</span><span style="color:#30353b">.</span><span style="color:#e6485e">GC260</span></div>
<div class="num" style="left:210.60px;width:110px;top:387.65px;line-height:16px">11,919</div>
<div class="num" style="left:330.60px;width:110px;top:387.65px;line-height:16px">8,915</div>
<div class="num" style="left:450.60px;width:110px;top:387.65px;line-height:16px">12,865</div>
<div class="num" style="left:570.60px;width:110px;top:387.65px;line-height:16px">20,364</div>
<div class="num" style="left:690.60px;width:110px;top:387.65px;line-height:16px">10,777</div>
<div class="num" style="left:810.60px;width:110px;top:387.65px;line-height:16px">14,907</div>
<div class="num" style="left:930.60px;width:110px;top:387.65px;line-height:16px">12,422</div>
<div class="num" style="left:1050.60px;width:110px;top:387.65px;line-height:16px">11,583</div>
<div class="num" style="left:1170.60px;width:110px;top:387.65px;line-height:16px">9,284</div>
<div class="num" style="left:1290.60px;width:110px;top:387.65px;line-height:16px">6,123</div>
<div class="num" style="left:1410.60px;width:110px;top:387.65px;line-height:16px">11,159</div>
<div class="num" style="left:1530.60px;width:110px;top:387.65px;line-height:16px">5,035</div>
<div class="num" style="left:1650.60px;width:110px;top:387.65px;line-height:16px">11,628</div>
<div class="num" style="left:1770.60px;width:110px;top:387.65px;line-height:16px">13,187</div>
<div class="num" style="left:1890.60px;width:110px;top:387.65px;line-height:16px">10,955</div>
<div class="abs" style="left:0;top:437.50px;width:1962px;height:1px;background:#e7eaee"></div>
<div class="ptxt mono" style="top:415.82px;line-height:16px"><span style="color:#36a99c">codes</span><span style="color:#30353b">.</span><span style="color:#5a62e6">GC270</span></div>
<div class="num" style="left:210.60px;width:110px;top:415.62px;line-height:16px">12</div>
<div class="num" style="left:330.60px;width:110px;top:415.62px;line-height:16px">2</div>
<div class="num" style="left:450.60px;width:110px;top:415.62px;line-height:16px">2</div>
<div class="num" style="left:570.60px;width:110px;top:415.62px;line-height:16px">1</div>
<div class="num" style="left:690.60px;width:110px;top:415.62px;line-height:16px">0</div>
<div class="num" style="left:810.60px;width:110px;top:415.62px;line-height:16px">3</div>
<div class="num" style="left:930.60px;width:110px;top:415.62px;line-height:16px">2</div>
<div class="num" style="left:1050.60px;width:110px;top:415.62px;line-height:16px">5</div>
<div class="num" style="left:1170.60px;width:110px;top:415.62px;line-height:16px">3</div>
<div class="num" style="left:1290.60px;width:110px;top:415.62px;line-height:16px">1</div>
<div class="num" style="left:1410.60px;width:110px;top:415.62px;line-height:16px">3</div>
<div class="num" style="left:1530.60px;width:110px;top:415.62px;line-height:16px">2</div>
<div class="num" style="left:1650.60px;width:110px;top:415.62px;line-height:16px">5</div>
<div class="num" style="left:1770.60px;width:110px;top:415.62px;line-height:16px">9</div>
<div class="num" style="left:1890.60px;width:110px;top:415.62px;line-height:16px">4</div>
<div class="abs" style="left:0;top:465.47px;width:1962px;height:1px;background:#e7eaee"></div>
<div class="ptxt mono" style="top:443.80px;line-height:16px"><span style="color:#36a99c">codes</span><span style="color:#30353b">.</span><span style="color:#36a99c">GC290</span></div>
<div class="num" style="left:210.60px;width:110px;top:443.60px;line-height:16px">14,933</div>
<div class="num" style="left:330.60px;width:110px;top:443.60px;line-height:16px">13,588</div>
<div class="num" style="left:450.60px;width:110px;top:443.60px;line-height:16px">19,926</div>
<div class="num" style="left:570.60px;width:110px;top:443.60px;line-height:16px">46,112</div>
<div class="num" style="left:690.60px;width:110px;top:443.60px;line-height:16px">15,708</div>
<div class="num" style="left:810.60px;width:110px;top:443.60px;line-height:16px">19,677</div>
<div class="num" style="left:930.60px;width:110px;top:443.60px;line-height:16px">16,009</div>
<div class="num" style="left:1050.60px;width:110px;top:443.60px;line-height:16px">18,718</div>
<div class="num" style="left:1170.60px;width:110px;top:443.60px;line-height:16px">19,424</div>
<div class="num" style="left:1290.60px;width:110px;top:443.60px;line-height:16px">10,753</div>
<div class="num" style="left:1410.60px;width:110px;top:443.60px;line-height:16px">20,409</div>
<div class="num" style="left:1530.60px;width:110px;top:443.60px;line-height:16px">5,711</div>
<div class="num" style="left:1650.60px;width:110px;top:443.60px;line-height:16px">19,961</div>
<div class="num" style="left:1770.60px;width:110px;top:443.60px;line-height:16px">39,531</div>
<div class="num" style="left:1890.60px;width:110px;top:443.60px;line-height:16px">17,342</div>
<div class="abs" style="left:0;top:493.45px;width:1962px;height:1px;background:#e7eaee"></div>
<div class="ptxt mono" style="top:471.77px;line-height:16px"><span style="color:#36a99c">codes</span><span style="color:#30353b">.</span><span style="color:#eba23c">PA900M</span></div>
<div class="num" style="left:210.60px;width:110px;top:471.57px;line-height:16px">4</div>
<div class="num" style="left:330.60px;width:110px;top:471.57px;line-height:16px">7</div>
<div class="num" style="left:450.60px;width:110px;top:471.57px;line-height:16px">3</div>
<div class="num" style="left:570.60px;width:110px;top:471.57px;line-height:16px">2</div>
<div class="num" style="left:690.60px;width:110px;top:471.57px;line-height:16px">3</div>
<div class="num" style="left:810.60px;width:110px;top:471.57px;line-height:16px">1</div>
<div class="num" style="left:930.60px;width:110px;top:471.57px;line-height:16px">112</div>
<div class="num" style="left:1050.60px;width:110px;top:471.57px;line-height:16px">141</div>
<div class="num" style="left:1170.60px;width:110px;top:471.57px;line-height:16px">125</div>
<div class="num" style="left:1290.60px;width:110px;top:471.57px;line-height:16px">154</div>
<div class="num" style="left:1410.60px;width:110px;top:471.57px;line-height:16px">172</div>
<div class="num" style="left:1530.60px;width:110px;top:471.57px;line-height:16px">34</div>
<div class="num" style="left:1650.60px;width:110px;top:471.57px;line-height:16px">76</div>
<div class="num" style="left:1770.60px;width:110px;top:471.57px;line-height:16px">4</div>
<div class="num" style="left:1890.60px;width:110px;top:471.57px;line-height:16px">6</div>
<div class="abs" style="left:0;top:521.43px;width:1962px;height:1px;background:#e7eaee"></div>
<div class="ptxt mono" style="top:499.75px;line-height:16px"><span style="color:#36a99c">codes</span><span style="color:#30353b">.</span><span style="color:#e0413f">PC320M</span></div>
<div class="num" style="left:210.60px;width:110px;top:499.55px;line-height:16px">10</div>
<div class="num" style="left:330.60px;width:110px;top:499.55px;line-height:16px">5</div>
<div class="num" style="left:450.60px;width:110px;top:499.55px;line-height:16px">1</div>
<div class="num" style="left:570.60px;width:110px;top:499.55px;line-height:16px">11</div>
<div class="num" style="left:690.60px;width:110px;top:499.55px;line-height:16px">2</div>
<div class="num" style="left:810.60px;width:110px;top:499.55px;line-height:16px">6</div>
<div class="num" style="left:930.60px;width:110px;top:499.55px;line-height:16px">1</div>
<div class="num" style="left:1050.60px;width:110px;top:499.55px;line-height:16px">0</div>
<div class="num" style="left:1170.60px;width:110px;top:499.55px;line-height:16px">0</div>
<div class="num" style="left:1290.60px;width:110px;top:499.55px;line-height:16px">2</div>
<div class="num" style="left:1410.60px;width:110px;top:499.55px;line-height:16px">3</div>
<div class="num" style="left:1530.60px;width:110px;top:499.55px;line-height:16px">3</div>
<div class="num" style="left:1650.60px;width:110px;top:499.55px;line-height:16px">10</div>
<div class="num" style="left:1770.60px;width:110px;top:499.55px;line-height:16px">7</div>
<div class="num" style="left:1890.60px;width:110px;top:499.55px;line-height:16px">2</div>
<div class="abs" style="left:0;top:549.40px;width:1962px;height:1px;background:#e7eaee"></div>
<div class="ptxt mono" style="top:527.72px;line-height:16px"><span style="color:#36a99c">codes</span><span style="color:#30353b">.</span><span style="color:#7b5ce6">PD404M</span></div>
<div class="num" style="left:210.60px;width:110px;top:527.52px;line-height:16px">36,912</div>
<div class="num" style="left:330.60px;width:110px;top:527.52px;line-height:16px">15,018</div>
<div class="num" style="left:450.60px;width:110px;top:527.52px;line-height:16px">15,288</div>
<div class="num" style="left:570.60px;width:110px;top:527.52px;line-height:16px">26,062</div>
<div class="num" style="left:690.60px;width:110px;top:527.52px;line-height:16px">13,535</div>
<div class="num" style="left:810.60px;width:110px;top:527.52px;line-height:16px">9,352</div>
<div class="num" style="left:930.60px;width:110px;top:527.52px;line-height:16px">11,619</div>
<div class="num" style="left:1050.60px;width:110px;top:527.52px;line-height:16px">13,646</div>
<div class="num" style="left:1170.60px;width:110px;top:527.52px;line-height:16px">8,175</div>
<div class="num" style="left:1290.60px;width:110px;top:527.52px;line-height:16px">10,862</div>
<div class="num" style="left:1410.60px;width:110px;top:527.52px;line-height:16px">5,841</div>
<div class="num" style="left:1530.60px;width:110px;top:527.52px;line-height:16px">6,488</div>
<div class="num" style="left:1650.60px;width:110px;top:527.52px;line-height:16px">22,565</div>
<div class="num" style="left:1770.60px;width:110px;top:527.52px;line-height:16px">26,729</div>
<div class="num" style="left:1890.60px;width:110px;top:527.52px;line-height:16px">31,204</div>
<div class="abs" style="left:0;top:577.37px;width:1962px;height:1px;background:#e7eaee"></div>
<div class="ptxt mono" style="top:555.70px;line-height:16px"><span style="color:#36a99c">codes</span><span style="color:#30353b">.</span><span style="color:#3aaed6">PD500M</span></div>
<div class="num" style="left:210.60px;width:110px;top:555.50px;line-height:16px">1,963</div>
<div class="num" style="left:330.60px;width:110px;top:555.50px;line-height:16px">1,692</div>
<div class="num" style="left:450.60px;width:110px;top:555.50px;line-height:16px">1,383</div>
<div class="num" style="left:570.60px;width:110px;top:555.50px;line-height:16px">614</div>
<div class="num" style="left:690.60px;width:110px;top:555.50px;line-height:16px">537</div>
<div class="num" style="left:810.60px;width:110px;top:555.50px;line-height:16px">652</div>
<div class="num" style="left:930.60px;width:110px;top:555.50px;line-height:16px">468</div>
<div class="num" style="left:1050.60px;width:110px;top:555.50px;line-height:16px">823</div>
<div class="num" style="left:1170.60px;width:110px;top:555.50px;line-height:16px">94,628</div>
<div class="num" style="left:1290.60px;width:110px;top:555.50px;line-height:16px">98,365</div>
<div class="num" style="left:1410.60px;width:110px;top:555.50px;line-height:16px">11,445</div>
<div class="num" style="left:1530.60px;width:110px;top:555.50px;line-height:16px">2,364</div>
<div class="num" style="left:1650.60px;width:110px;top:555.50px;line-height:16px">4,614</div>
<div class="num" style="left:1770.60px;width:110px;top:555.50px;line-height:16px">3,678</div>
<div class="num" style="left:1890.60px;width:110px;top:555.50px;line-height:16px">2,105</div>
<div class="abs" style="left:0;top:605.35px;width:1962px;height:1px;background:#e7eaee"></div>
<div class="ptxt mono" style="top:583.67px;line-height:16px"><span style="color:#36a99c">codes</span><span style="color:#30353b">.</span><span style="color:#3ca86c">PE300M</span></div>
<div class="num" style="left:210.60px;width:110px;top:583.47px;line-height:16px">7,317</div>
<div class="num" style="left:330.60px;width:110px;top:583.47px;line-height:16px">6,503</div>
<div class="num" style="left:450.60px;width:110px;top:583.47px;line-height:16px">11,791</div>
<div class="num" style="left:570.60px;width:110px;top:583.47px;line-height:16px">8,533</div>
<div class="num" style="left:690.60px;width:110px;top:583.47px;line-height:16px">8,634</div>
<div class="num" style="left:810.60px;width:110px;top:583.47px;line-height:16px">7,187</div>
<div class="num" style="left:930.60px;width:110px;top:583.47px;line-height:16px">5,527</div>
<div class="num" style="left:1050.60px;width:110px;top:583.47px;line-height:16px">7,002</div>
<div class="num" style="left:1170.60px;width:110px;top:583.47px;line-height:16px">9,481</div>
<div class="num" style="left:1290.60px;width:110px;top:583.47px;line-height:16px">4,493</div>
<div class="num" style="left:1410.60px;width:110px;top:583.47px;line-height:16px">7,452</div>
<div class="num" style="left:1530.60px;width:110px;top:583.47px;line-height:16px">3,148</div>
<div class="num" style="left:1650.60px;width:110px;top:583.47px;line-height:16px">5,908</div>
<div class="num" style="left:1770.60px;width:110px;top:583.47px;line-height:16px">6,100</div>
<div class="num" style="left:1890.60px;width:110px;top:583.47px;line-height:16px">7,213</div>
<div class="abs" style="left:0;top:633.32px;width:1962px;height:1px;background:#e7eaee"></div>
<div class="ptxt mono" style="top:611.65px;line-height:16px"><span style="color:#36a99c">codes</span><span style="color:#30353b">.</span><span style="color:#ee7a37">PE310M</span></div>
<div class="num" style="left:210.60px;width:110px;top:611.45px;line-height:16px">6</div>
<div class="num" style="left:330.60px;width:110px;top:611.45px;line-height:16px">74</div>
<div class="num" style="left:450.60px;width:110px;top:611.45px;line-height:16px">15</div>
<div class="num" style="left:570.60px;width:110px;top:611.45px;line-height:16px">3</div>
<div class="num" style="left:690.60px;width:110px;top:611.45px;line-height:16px">1</div>
<div class="num" style="left:810.60px;width:110px;top:611.45px;line-height:16px">13</div>
<div class="num" style="left:930.60px;width:110px;top:611.45px;line-height:16px">51</div>
<div class="num" style="left:1050.60px;width:110px;top:611.45px;line-height:16px">57</div>
<div class="num" style="left:1170.60px;width:110px;top:611.45px;line-height:16px">105</div>
<div class="num" style="left:1290.60px;width:110px;top:611.45px;line-height:16px">78</div>
<div class="num" style="left:1410.60px;width:110px;top:611.45px;line-height:16px">74</div>
<div class="num" style="left:1530.60px;width:110px;top:611.45px;line-height:16px">30</div>
<div class="num" style="left:1650.60px;width:110px;top:611.45px;line-height:16px">29</div>
<div class="num" style="left:1770.60px;width:110px;top:611.45px;line-height:16px">17</div>
<div class="num" style="left:1890.60px;width:110px;top:611.45px;line-height:16px">12</div>
<div class="abs" style="left:0;top:661.30px;width:1962px;height:1px;background:#e7eaee"></div>
<div class="ptxt mono" style="top:639.62px;line-height:16px"><span style="color:#36a99c">codes</span><span style="color:#30353b">.</span><span style="color:#df4a9c">PP210M</span></div>
<div class="num" style="left:210.60px;width:110px;top:639.42px;line-height:16px">0</div>
<div class="num" style="left:330.60px;width:110px;top:639.42px;line-height:16px">0</div>
<div class="num" style="left:450.60px;width:110px;top:639.42px;line-height:16px">0</div>
<div class="num" style="left:570.60px;width:110px;top:639.42px;line-height:16px">0</div>
<div class="num" style="left:690.60px;width:110px;top:639.42px;line-height:16px">0</div>
<div class="num" style="left:810.60px;width:110px;top:639.42px;line-height:16px">0</div>
<div class="num" style="left:930.60px;width:110px;top:639.42px;line-height:16px">0</div>
<div class="num" style="left:1050.60px;width:110px;top:639.42px;line-height:16px">0</div>
<div class="num" style="left:1170.60px;width:110px;top:639.42px;line-height:16px">0</div>
<div class="num" style="left:1290.60px;width:110px;top:639.42px;line-height:16px">0</div>
<div class="num" style="left:1410.60px;width:110px;top:639.42px;line-height:16px">0</div>
<div class="num" style="left:1530.60px;width:110px;top:639.42px;line-height:16px">2</div>
<div class="num" style="left:1650.60px;width:110px;top:639.42px;line-height:16px">1</div>
<div class="num" style="left:1770.60px;width:110px;top:639.42px;line-height:16px">0</div>
<div class="num" style="left:1890.60px;width:110px;top:639.42px;line-height:16px">0</div>
<div class="abs" style="left:0;top:689.27px;width:1962px;height:1px;background:#e7eaee"></div>
<div class="ptxt mono" style="top:667.60px;line-height:16px"><span style="color:#36a99c">codes</span><span style="color:#30353b">.</span><span style="color:#3b82f0">PP300M</span></div>
<div class="num" style="left:210.60px;width:110px;top:667.40px;line-height:16px">273,528</div>
<div class="num" style="left:330.60px;width:110px;top:667.40px;line-height:16px">200,647</div>
<div class="num" style="left:450.60px;width:110px;top:667.40px;line-height:16px">203,377</div>
<div class="num" style="left:570.60px;width:110px;top:667.40px;line-height:16px">136,152</div>
<div class="num" style="left:690.60px;width:110px;top:667.40px;line-height:16px">145,914</div>
<div class="num" style="left:810.60px;width:110px;top:667.40px;line-height:16px">166,340</div>
<div class="num" style="left:930.60px;width:110px;top:667.40px;line-height:16px">189,154</div>
<div class="num" style="left:1050.60px;width:110px;top:667.40px;line-height:16px">177,035</div>
<div class="num" style="left:1170.60px;width:110px;top:667.40px;line-height:16px">162,111</div>
<div class="num" style="left:1290.60px;width:110px;top:667.40px;line-height:16px">176,291</div>
<div class="num" style="left:1410.60px;width:110px;top:667.40px;line-height:16px">103,492</div>
<div class="num" style="left:1530.60px;width:110px;top:667.40px;line-height:16px">50,829</div>
<div class="num" style="left:1650.60px;width:110px;top:667.40px;line-height:16px">183,238</div>
<div class="num" style="left:1770.60px;width:110px;top:667.40px;line-height:16px">234,432</div>
<div class="num" style="left:1890.60px;width:110px;top:667.40px;line-height:16px">306,118</div>
<div class="abs" style="left:208.39999999999998px;top:53px;width:1px;height:700px;background:#e3e7ec"></div>
<div class="abs" style="left:209.39999999999998px;top:53px;width:6px;height:46px;background:linear-gradient(90deg,rgba(0,0,0,.06),rgba(0,0,0,0))"></div>
</div>
<div class="abs" style="left:33px;top:1611px;width:1974px;height:54px;background:rgba(252,252,253,.97)">
<svg class="abs" style="left:17px;top:20px" width="15" height="15" viewBox="0 0 15 15"><path d="M1 1.5 H14 L8.8 8 V13.5 L6.2 12 V8 Z" fill="none" stroke="#42b5a2" stroke-width="1.3" stroke-linejoin="round"/></svg>
<div class="sb" style="left:36.2px;top:18.5px;line-height:17px">Key: <span class="sbv">commodity::events::product_target::calculation</span></div>
<svg class="abs" style="left:350px;top:20px" width="14" height="15" viewBox="0 0 14 15"><rect x="1" y="8" width="3" height="6" rx="1.2" fill="none" stroke="#42b5a2" stroke-width="1.1"/><rect x="5.5" y="4.5" width="3" height="9.5" rx="1.2" fill="none" stroke="#42b5a2" stroke-width="1.1"/><rect x="10" y="1" width="3" height="13" rx="1.2" fill="none" stroke="#42b5a2" stroke-width="1.1"/></svg>
<div class="sb" style="left:369.5px;top:18.5px;line-height:17px">Points: <span class="sbv">25</span></div>
<svg class="abs" style="left:445px;top:20px" width="14" height="14" viewBox="0 0 14 14"><g stroke="#42b5a2" stroke-width="1.3" stroke-linecap="round"><line x1="1" y1="3" x2="1.3" y2="3"/><line x1="1" y1="7" x2="1.3" y2="7"/><line x1="1" y1="11" x2="1.3" y2="11"/><line x1="4.5" y1="3" x2="13" y2="3"/><line x1="4.5" y1="7" x2="13" y2="7"/><line x1="4.5" y1="11" x2="13" y2="11"/></g></svg>
<div class="sb" style="left:464px;top:18.5px;line-height:17px">Paths: <span class="sbv">195</span></div>
<svg class="abs" style="left:541.5px;top:19.5px" width="15" height="15" viewBox="0 0 15 15"><circle cx="7.5" cy="7.5" r="6" fill="none" stroke="#42b5a2" stroke-width="1.3" stroke-dasharray="2.6 2.1"/><path d="M5.3 6.5 L7.5 8.7 L9.7 6.5" fill="none" stroke="#42b5a2" stroke-width="1.1" stroke-linecap="round"/></svg>
<div class="sb" style="left:561.2px;top:18.5px;line-height:17px">Transponders:</div>
<svg class="abs" style="left:648.5px;top:21.5px" width="11" height="11" viewBox="0 0 11 11"><circle cx="5.5" cy="5.5" r="4.7" fill="none" stroke="#4fb575" stroke-width="1.1"/><path d="M3.3 5.6 L4.9 7.1 L7.8 4" fill="none" stroke="#4fb575" stroke-width="1.1" stroke-linecap="round" stroke-linejoin="round"/></svg>
<div class="sb sbv" style="left:664.5px;top:18.5px;line-height:17px">3</div>
<svg class="abs" style="left:675px;top:21px" width="12" height="11" viewBox="0 0 12 11"><path d="M6 1 L11.2 10 H0.8 Z" fill="none" stroke="#e8736b" stroke-width="1.1" stroke-linejoin="round"/><line x1="6" y1="4" x2="6" y2="6.8" stroke="#e8736b" stroke-width="1.1"/><circle cx="6" cy="8.3" r=".55" fill="#e8736b"/></svg>
<div class="sb sbv" style="left:691.5px;top:18.5px;line-height:17px">0</div>
<svg class="abs" style="left:716.5px;top:19px" width="13" height="16" viewBox="0 0 13 16"><path d="M8 1 L2 9 H6.5 L5 15 L11 7 H6.5 Z" fill="none" stroke="#42b5a2" stroke-width="1.2" stroke-linejoin="round"/></svg>
<div class="sb" style="left:735px;top:18.5px;line-height:17px">Load: <span class="sbv">1s</span></div>
<div class="abs" style="left:1864px;top:13.400000000000091px;width:94px;height:27px;border:1px solid #d9dde2;border-radius:6px;background:#fff"></div>
<svg class="abs" style="left:1874px;top:19px" width="16" height="16" viewBox="0 0 16 16"><path d="M8 2 V10.5 M4.8 7.5 L8 10.7 L11.2 7.5" fill="none" stroke="#42b5a2" stroke-width="1.3" stroke-linecap="round" stroke-linejoin="round"/><path d="M2 11 V13.5 H14 V11" fill="none" stroke="#42b5a2" stroke-width="1.3" stroke-linecap="round" stroke-linejoin="round"/></svg>
<div class="sb" style="left:1893.5px;top:18px;line-height:17px;font-size:13.3px;color:#2b3036">Export</div>
<svg class="abs" style="left:1939px;top:24px" width="8" height="6" viewBox="0 0 8 6"><path d="M1 1.5 L4 4.5 L7 1.5" fill="none" stroke="#6b7280" stroke-width="1.1" stroke-linecap="round"/></svg>
</div>
<div class="abs" style="left:0;top:0;width:2039px;height:1664px;border-radius:33px;box-shadow:inset 0 0 0 1px rgba(0,0,0,.18),inset 0 0 0 1.6px rgba(255,255,255,.35);pointer-events:none"></div>
</div></body></html>
